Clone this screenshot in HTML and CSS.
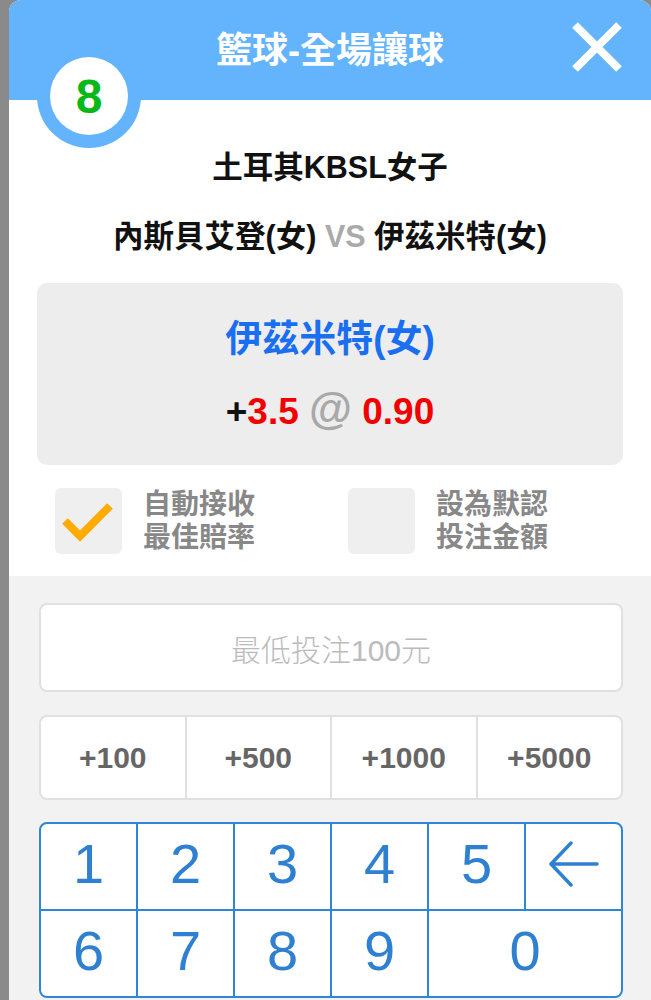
FILE: index.html
```html
<!DOCTYPE html>
<html lang="zh-Hant">

<head>
    <meta charset="UTF-8" />
    <meta name="viewport" content="width=device-width, initial-scale=1" />
    <title>籃球-全場讓球</title>
    <link rel="stylesheet" href="styles.css">
</head>

<body>

    <div class="sheet">

        <!-- HEADER -->
        <header class="sheet-head">
            <span class="badge"><span class="badge-num">8</span></span>
            <h1>籃球-全場讓球</h1>
            <button class="close" type="button" aria-label="關閉">
                <svg width="50" height="50" viewBox="0 0 50 50">
                    <path d="M3 3 L47 47 M47 3 L3 47" stroke="#fff" stroke-width="8" fill="none" />
                </svg>
            </button>
        </header>

        <!-- MATCH INFO -->
        <section class="match">
            <p class="league">土耳其KBSL女子</p>
            <p class="teams">內斯貝艾登(女) <span class="vs">VS</span> 伊茲米特(女)</p>

            <div class="pick">
                <div class="pick-team">伊茲米特(女)</div>
                <div class="pick-odds">
                    <span class="sign">+</span><span class="red">3.5</span>
                    <span class="at">@</span>
                    <span class="red">0.90</span>
                </div>
            </div>

            <div class="options">
                <label class="option">
                    <span class="box">
                        <svg width="67" height="66" viewBox="0 0 67 66">
                            <path d="M10 33 L25 48 L55 18" stroke="#ffab00" stroke-width="8" fill="none" />
                        </svg>
                    </span>
                    <span class="option-text">自動接收<br>最佳賠率</span>
                </label>
                <label class="option">
                    <span class="box"></span>
                    <span class="option-text">設為默認<br>投注金額</span>
                </label>
            </div>
        </section>

        <!-- STAKE -->
        <section class="stake">
            <div class="amount">最低投注100元</div>

            <div class="quick">
                <button type="button">+100</button>
                <button type="button">+500</button>
                <button type="button">+1000</button>
                <button type="button">+5000</button>
            </div>

            <div class="keypad">
                <button type="button">1</button>
                <button type="button">2</button>
                <button type="button">3</button>
                <button type="button">4</button>
                <button type="button">5</button>
                <button type="button" aria-label="刪除">
                    <svg width="50" height="46" viewBox="0 0 50 46">
                        <path d="M48 23 L2 23 M22 2 L2 23 L22 44" stroke="#2f80d0" stroke-width="3.5"
                            stroke-linecap="round" stroke-linejoin="round" fill="none" />
                    </svg>
                </button>
                <button type="button">6</button>
                <button type="button">7</button>
                <button type="button">8</button>
                <button type="button">9</button>
                <button type="button" class="wide">0</button>
            </div>
        </section>

    </div>

</body>

</html>
```

FILE: styles.css
```css
* {
    box-sizing: border-box;
}

html,
body {
    height: 100%;
}

body {
    margin: 0;
    font-family: "Liberation Sans", "Noto Sans CJK TC", sans-serif;
    background: #8a8a8a;
    overflow: hidden;
}

button {
    font-family: inherit;
    border: none;
    padding: 0;
    cursor: pointer;
}

/* --- SHEET --- */
.sheet {
    margin-left: 9px;
    height: 1000px;
    display: flex;
    flex-direction: column;
    background: white;
    border-radius: 12px 12px 0 0;
    overflow: hidden;
}

.sheet-head {
    position: relative;
    z-index: 1;
    height: 100px;
    flex-shrink: 0;
    display: flex;
    justify-content: center;
    align-items: center;
    background: #63b3fd;
}

.sheet-head h1 {
    margin: 0 0 6px;
    font-size: 36px;
    font-weight: bold;
    color: white;
}

.close {
    position: absolute;
    top: 22px;
    right: 29px;
    width: 50px;
    height: 50px;
    background: none;
}

.close svg {
    display: block;
}

.badge {
    position: absolute;
    left: 28px;
    top: 44px;
    width: 104px;
    height: 104px;
    border-radius: 50%;
    background: #63b3fd;
    display: flex;
    justify-content: center;
    align-items: center;
}

.badge-num {
    width: 78px;
    height: 78px;
    border-radius: 50%;
    background: white;
    display: flex;
    justify-content: center;
    align-items: center;
    font-size: 48px;
    font-weight: bold;
    color: #08b818;
}

/* --- MATCH --- */
.match {
    padding: 47px 28px 22px;
    text-align: center;
}

.league,
.teams {
    margin: 0;
    font-size: 30.5px;
    line-height: 40px;
    font-weight: bold;
    color: #111;
}

.teams {
    margin-top: 29px;
}

.teams .vs {
    color: #aaa;
}

.pick {
    margin-top: 27px;
    padding: 32px 0 28px;
    background: #ededed;
    border-radius: 10px;
}

.pick-team {
    font-size: 37px;
    line-height: 50px;
    font-weight: bold;
    color: #1a6ef0;
}

.pick-odds {
    margin-top: 19px;
    font-size: 37px;
    line-height: 50px;
    font-weight: bold;
}

.pick-odds .sign {
    color: #111;
}

.pick-odds .red {
    color: #f20000;
}

.pick-odds .at {
    font-size: 44px;
    color: #a8a8a8;
}

.options {
    margin-top: 23px;
    display: grid;
    grid-template-columns: 1fr 1fr;
}

.option {
    display: flex;
    align-items: center;
    gap: 21px;
    padding-left: 18px;
    text-align: left;
}

.box {
    width: 67px;
    height: 66px;
    border-radius: 6px;
    background: #efefef;
}

.box svg {
    display: block;
}

.option-text {
    font-size: 28px;
    line-height: 33px;
    font-weight: bold;
    color: #888;
}

/* --- STAKE --- */
.stake {
    flex: 1;
    padding: 27px 28px 0 30px;
    background: #f2f2f2;
}

.amount {
    height: 89px;
    display: flex;
    justify-content: center;
    align-items: center;
    background: white;
    border: 2px solid #e0e0e0;
    border-radius: 8px;
    font-size: 30px;
    font-weight: 300;
    color: #bbb;
}

.quick {
    margin-top: 23px;
    height: 85px;
    display: grid;
    grid-template-columns: repeat(4, 1fr);
    gap: 2px;
    background: #e0e0e0;
    border: 2px solid #e0e0e0;
    border-radius: 8px;
    overflow: hidden;
}

.quick button {
    background: white;
    font-size: 30px;
    font-weight: bold;
    color: #666;
}

.keypad {
    margin-top: 22px;
    display: grid;
    grid-template-columns: repeat(6, 1fr);
    grid-auto-rows: 85px;
    gap: 2px;
    background: #2f86d8;
    border: 2px solid #2f86d8;
    border-radius: 8px;
    overflow: hidden;
}

.keypad button {
    display: flex;
    justify-content: center;
    align-items: center;
    padding-bottom: 6px;
    background: white;
    font-size: 56px;
    color: #2f80d0;
}

.keypad .wide {
    grid-column: span 2;
}
```
